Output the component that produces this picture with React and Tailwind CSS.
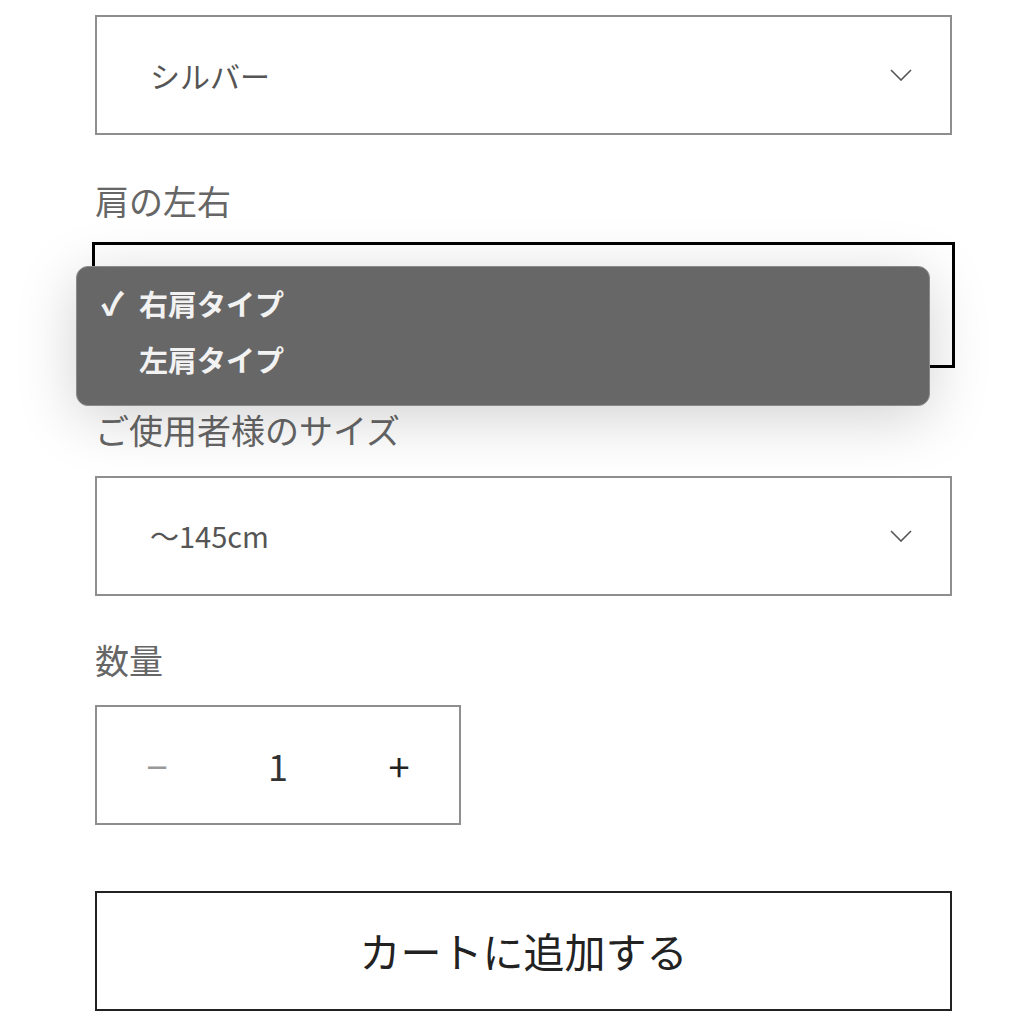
import React from "react";

const font = { fontFamily: '"Noto Sans CJK JP", "Noto Sans", sans-serif' };

function Chevron() {
  return (
    <svg width="22" height="12" viewBox="0 0 22 12" fill="none" className="shrink-0">
      <path d="M1 1 L11 11 L21 1" stroke="#555" strokeWidth="1.6" />
    </svg>
  );
}

function Select({ value, className = "", textClass = "text-[29px]" }) {
  return (
    <div className={`flex h-[120px] items-center justify-between border-2 border-[#8e8e8e] bg-white pl-[53px] pr-[38px] ${className}`}>
      <span className={`${textClass} text-[#555]`}>{value}</span>
      <Chevron />
    </div>
  );
}

function Label({ children, className = "" }) {
  return <div className={`h-[40px] text-[34px] leading-[40px] text-[#666] ${className}`}>{children}</div>;
}

export default function App() {
  return (
    <div className="min-h-[1024px] w-[1024px] overflow-hidden bg-white" style={font}>
      <div className="ml-[95px] w-[857px] pt-[15px]">
        <Select value="シルバー" textClass="text-[30px]" />
        <Label className="mt-[46px]">肩の左右</Label>
        <div className="relative mt-[24px] h-[120px] bg-white outline-[3px] outline-solid outline-black">
          <div className="absolute left-[-19px] top-[21px] z-10 h-[140px] w-[854px] rounded-[12px] border border-[#8a8a8a] bg-[#676767] shadow-[0_12px_60px_rgba(0,0,0,0.18)]">
            <div className="flex h-[60px] items-end pl-[24px] pb-[2px] text-[29px] font-bold text-[#f2f2f2]">
              <span className="w-[38px] text-[31px] font-black">✓</span>
              <span>右肩タイプ</span>
            </div>
            <div className="flex h-[56px] items-end pl-[62px] pb-[2px] text-[29px] font-bold text-[#f2f2f2]">
              <span>左肩タイプ</span>
            </div>
          </div>
        </div>
        <Label className="mt-[45px]">ご使用者様のサイズ</Label>
        <Select value="〜145cm" className="mt-[26px]" />
        <Label className="mt-[44px]">数量</Label>
        <div className="mt-[25px] flex h-[120px] w-[366px] items-center border-2 border-[#8e8e8e]">
          <div className="flex w-[120px] justify-center text-[38px] text-[#999]">−</div>
          <div className="flex flex-1 justify-center text-[36px] text-[#333]">1</div>
          <div className="flex w-[120px] justify-center text-[38px] text-[#222]">+</div>
        </div>
        <button className="mt-[66px] flex h-[120px] w-full items-center justify-center border-2 border-[#222] bg-white text-[41px] text-[#222]">
          カートに追加する
        </button>
      </div>
    </div>
  );
}
